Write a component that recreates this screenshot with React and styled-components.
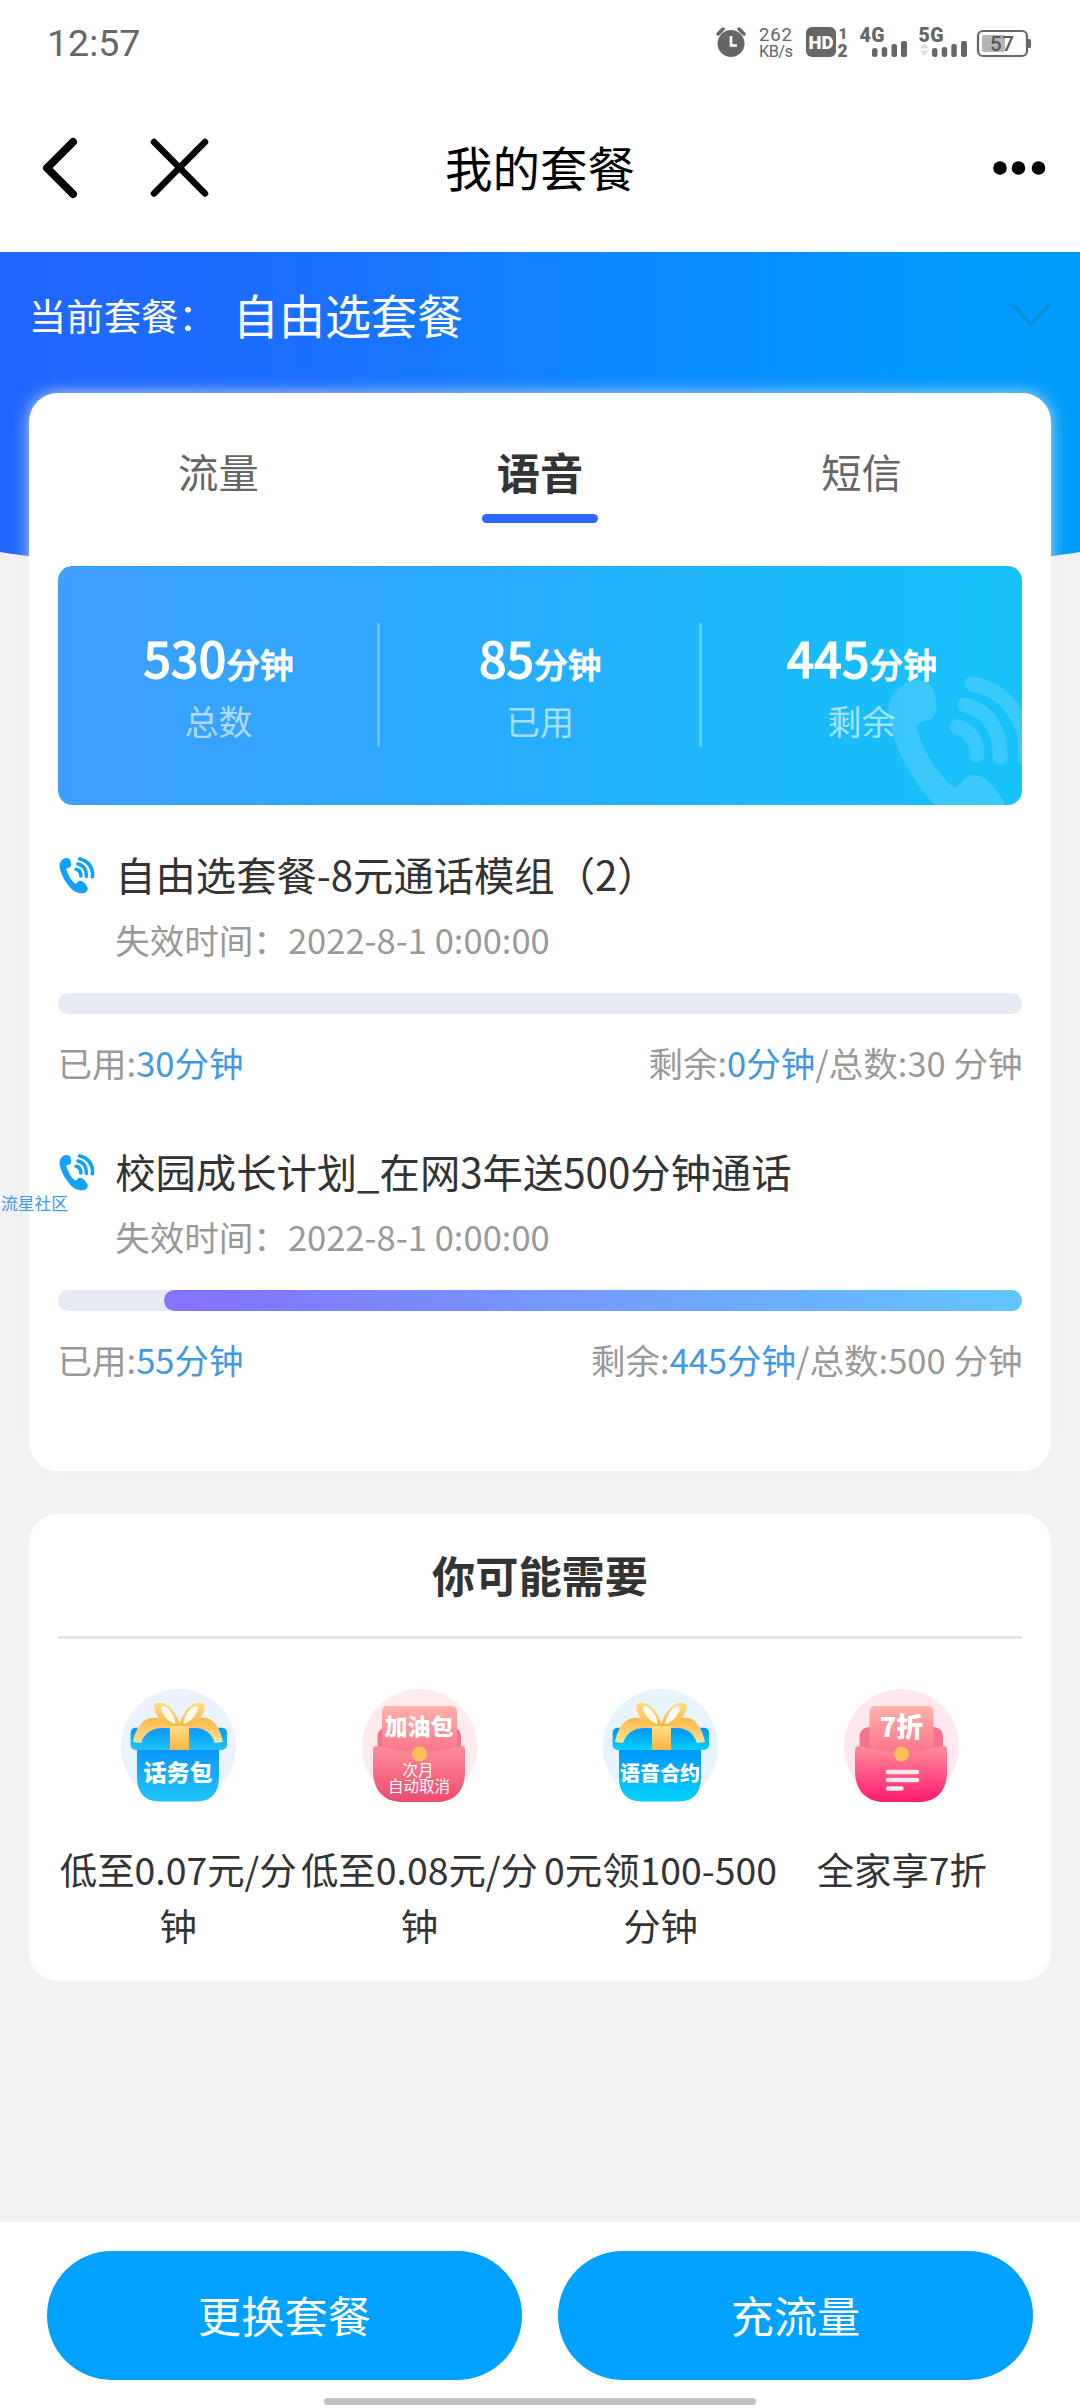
import React from 'react'
import styled, { createGlobalStyle } from 'styled-components'

const GlobalStyle = createGlobalStyle`
    * {
        box-sizing: border-box;
    }
    body {
        margin: 0;
        background: #f2f2f2;
        font-family: 'Noto Sans CJK SC', 'Noto Sans', sans-serif;
        color: #333;
    }
`

const Page = styled.div`
    position: relative;
    display: flex;
    flex-direction: column;
    width: 1080px;
    height: 2408px;
    overflow: hidden;
    background: #f2f2f2;
`

const StatusBar = styled.div`
    display: flex;
    align-items: center;
    justify-content: space-between;
    flex: none;
    height: 84px;
    padding: 0 48px 0 47px;
    background: #fff;
    color: #666;
    font-family: Roboto, sans-serif;
`

const Clock = styled.div`
    padding-top: 1px;
    font-size: 37.5px;
    line-height: 44px;
`

const StatusIcons = styled.svg`
    display: block;
    width: 316px;
    height: 40px;
    font-family: Roboto, sans-serif;
`

const NavBar = styled.div`
    display: grid;
    grid-template-columns: 1fr auto 1fr;
    align-items: center;
    flex: none;
    height: 168px;
    padding: 0 33px;
    background: #fff;
    color: #000;
`

const NavLeft = styled.div`
    display: flex;
    align-items: center;
    gap: 72px;
    padding-left: 9px;
`

const NavTitle = styled.div`
    padding-bottom: 3px;
    font-size: 47.5px;
    line-height: 70px;
`

const NavMore = styled.svg`
    justify-self: end;
    width: 54px;
    height: 14px;
`

const Header = styled.div`
    display: flex;
    align-items: flex-start;
    flex: none;
    height: 341px;
    margin-bottom: -200.3px;
    padding: 29px 28.8px 0;
    color: #fff;
    background: linear-gradient(90deg, #2166ff 0%, #1b70ff 30%, #0b8aff 60%, #0099fd 88%, #009cfb 100%);
    clip-path: circle(3577px at 50% -3236px);
`

const HeaderLabel = styled.div`
    width: 204px;
    font-size: 37.44px;
    line-height: 68px;
    white-space: nowrap;
`

const HeaderName = styled.div`
    flex: 1;
    font-size: 46.08px;
    line-height: 66px;
`

const Card = styled.div`
    position: relative;
    flex: none;
    margin: ${props => props.$gap || 0}px 28.8px 0;
    padding: 0 28.8px;
    height: ${props => props.$height}px;
    border-radius: 28.8px;
    background: #fff;
    box-shadow: 0 0 16px ${props => (props.$glow ? 'rgba(242, 242, 242, 0.75)' : 'transparent')};
`

const Tabs = styled.div`
    display: grid;
    grid-template-columns: repeat(3, 1fr);
    height: 173px;
    padding-top: 46px;
`

const Tab = styled.div`
    display: flex;
    flex-direction: column;
    align-items: center;
    font-size: ${props => (props.$active ? 43.2 : 40.32)}px;
    font-weight: ${props => (props.$active ? 700 : 400)};
    line-height: 64px;
    color: ${props => (props.$active ? '#333' : '#666')};
    &::after {
        content: '';
        width: 115.2px;
        height: 9px;
        margin-top: 11px;
        border-radius: 5px;
        background: ${props => (props.$active ? '#2b68fd' : 'transparent')};
    }
`

const Summary = styled.div`
    position: relative;
    display: grid;
    grid-template-columns: repeat(3, 1fr);
    align-items: center;
    height: 239px;
    overflow: hidden;
    border-radius: 14.4px;
    color: #fff;
    background: linear-gradient(90deg, #3f9eff 0%, #2aabff 42%, #1bbafb 75%, #17c1fa 100%);
`

const Stat = styled.div`
    position: relative;
    display: flex;
    flex-direction: column;
    align-items: center;
    justify-content: center;
    height: 124px;
    padding-top: 2px;
    & + &::before {
        content: '';
        position: absolute;
        left: -2px;
        top: 0;
        width: 3px;
        height: 100%;
        background: rgba(255, 255, 255, 0.3);
    }
`

const StatValue = styled.div`
    font-size: 49px;
    font-weight: 500;
    line-height: 62px;
    letter-spacing: -0.3px;
    -webkit-text-stroke: 0.8px #fff;
    small {
        font-size: 34px;
    }
`

const StatLabel = styled.div`
    font-size: 34px;
    line-height: 52px;
    color: rgba(255, 255, 255, 0.62);
`

const Watermark = styled.svg`
    position: absolute;
    left: 828px;
    top: 110px;
    width: 158px;
    height: 158px;
    color: rgba(255, 255, 255, 0.15);
`

const PlanItem = styled.div`
    height: 296.8px;
`

const PlanTitle = styled.div`
    display: flex;
    align-items: center;
    height: 60px;
    font-size: 40.32px;
    line-height: 60px;
    svg {
        flex: none;
        width: 38px;
        height: 38px;
        margin: 4px 18.6px 0 1px;
        color: #0fa2f8;
    }
`

const PlanExpire = styled.div`
    height: 52px;
    margin: 9px 0 28px 57.6px;
    font-size: 34.56px;
    line-height: 52px;
    color: #999;
`

const Track = styled.div`
    display: flex;
    justify-content: flex-end;
    height: 21.6px;
    border-radius: 11px;
    background: #e8eaf3;
`

const TrackFill = styled.div`
    height: 100%;
    border-radius: 11px;
    background: linear-gradient(90deg, #8571fd, #62c6ff);
`

const PlanUsage = styled.div`
    display: flex;
    justify-content: space-between;
    margin-top: 21.5px;
    font-size: 34.5px;
    line-height: 52px;
    color: #999;
    em {
        font-style: normal;
        color: #4398e4;
    }
`

const Plans = styled.div`
    padding-top: 39px;
`

const SectionTitle = styled.div`
    height: 125px;
    border-bottom: 3px solid #e4e4e4;
    font-size: 43.2px;
    font-weight: 700;
    line-height: 121px;
    text-align: center;
`

const OfferGrid = styled.div`
    display: grid;
    grid-template-columns: repeat(4, 1fr);
    padding-top: 50px;
`

const Offer = styled.div`
    display: flex;
    flex-direction: column;
    align-items: center;
    font-size: 37.4px;
    line-height: 56.16px;
    text-align: center;
    word-break: break-all;
    svg {
        width: 115px;
        height: 113px;
        margin-bottom: 39px;
    }
`

const BottomBar = styled.div`
    display: flex;
    align-items: flex-start;
    gap: 36px;
    flex: none;
    height: 186px;
    margin-top: auto;
    padding: 29px 47px 0;
    background: #fff;
`

const PillButton = styled.button`
    flex: 1;
    height: 129px;
    padding: 0 0 3px;
    border: 0;
    border-radius: 65px;
    background: #00a1ff;
    color: #fff;
    font-family: inherit;
    font-size: 43.2px;
`

const HomeIndicator = styled.div`
    position: absolute;
    left: 324px;
    bottom: 3px;
    width: 432px;
    height: 7px;
    border-radius: 4px;
    background: #c1c1c1;
`

const CommunityMark = styled.div`
    position: absolute;
    left: 1px;
    top: 1190px;
    font-size: 16.8px;
    line-height: 26px;
    color: #3f97f3;
`

const PhoneWave = () => (
    <>
        <path
            fill="currentColor"
            d="M13 12C1 22 0 38 6 56C14 84 32 114 56 136C72 150 98 158 116 142C120 138 121 130 117 124C113 117 106 108 99 103C91 97 84 98 78 103C74 107 72 110 69 111C54 104 36 72 30 50C33 46 40 45 45 43C50 40 51 33 50 27C49 18 48 10 42 7C33 2 21 4 13 12Z"
        />
        <g fill="none" stroke="currentColor" strokeWidth="15" strokeLinecap="round">
            <path d="M71 51C84 54 91 64 91 79" />
            <path d="M79 29C102 34 115 55 114 81" />
            <path d="M86 8C120 14 144 46 139 82" />
        </g>
    </>
)

const StatusGlyphs = () => (
    <StatusIcons viewBox="717 22 316 40" fill="#666">
        <circle cx="732" cy="43.5" r="13.5" />
        <path d="M719 34l5-5M740 29l5 5" stroke="#666" strokeWidth="3.5" strokeLinecap="round" />
        <path d="M732 36v9.5h6" stroke="#fff" strokeWidth="2.6" fill="none" />
        <text x="760" y="40.5" fontSize="18.5" textLength="33">262</text>
        <text x="760" y="57" fontSize="16.5" textLength="34">KB/s</text>
        <rect x="807" y="27" width="30" height="30" rx="6" />
        <text x="809.6" y="49" fontSize="18.5" fontWeight="900" fill="#fff" textLength="25">HD</text>
        <text x="839.5" y="39" fontSize="15.5" fontWeight="900">1</text>
        <text x="838.5" y="57" fontSize="17.5" fontWeight="900">2</text>
        <text x="860.5" y="41.5" fontSize="19.5" fontWeight="900" textLength="25">4G</text>
        <rect x="873" y="48" width="5.5" height="9" rx="2.5" />
        <rect x="882.7" y="47" width="5.5" height="10" rx="2.5" />
        <rect x="892.5" y="44" width="5.5" height="13" rx="2" />
        <rect x="902" y="41" width="6" height="16" rx="2" />
        <text x="919.5" y="41.5" fontSize="19.5" fontWeight="900" textLength="25">5G</text>
        <path d="M925.5 43l4.5 5.5h-9zM925.5 56l4.5-5.5h-9z" fill="#ddd" />
        <rect x="933" y="48" width="5.5" height="9" rx="2.5" />
        <rect x="942.7" y="47" width="5.5" height="10" rx="2.5" />
        <rect x="952.3" y="44" width="5.5" height="13" rx="2" />
        <rect x="962" y="41" width="6" height="16" rx="2" />
        <rect x="979" y="31" width="49" height="25" rx="5" fill="none" stroke="#666" strokeWidth="2.2" />
        <rect x="983" y="35" width="23" height="17" rx="2" fill="#b5b5b5" />
        <path d="M1029 39h1.5q1.5 0 1.5 2v5q0 2-1.5 2H1029z" />
        <text x="991" y="51" fontSize="20.5" fontWeight="500" fill="#5a5a5a" textLength="24">57</text>
    </StatusIcons>
)

const GiftIcon = ({ id, bg, top, bottom, label, size }) => (
    <svg viewBox="0 0 115 113">
        <defs>
            <linearGradient id={`${id}-body`} x1="0" y1="0" x2="0" y2="1">
                <stop offset="0" stopColor={top} />
                <stop offset="1" stopColor={bottom} />
            </linearGradient>
            <linearGradient id={`${id}-gold`} x1="0" y1="0" x2="0" y2="1">
                <stop offset="0" stopColor="#fbb548" />
                <stop offset="1" stopColor="#ffe493" />
            </linearGradient>
            <linearGradient id={`${id}-knot`} x1="0" y1="0" x2="0" y2="1">
                <stop offset="0" stopColor="#ffdf8c" />
                <stop offset="1" stopColor="#fcb53e" />
            </linearGradient>
        </defs>
        <circle cx="57.5" cy="57.5" r="57.5" fill={bg} />
        <path d="M16 58H98V88C98 104 90 112.5 76 112.5H38C24 112.5 16 104 16 88Z" fill={`url(#${id}-body)`} />
        <rect x="9.6" y="38.7" width="96.4" height="22.3" rx="5" fill={`url(#${id}-body)`} />
        <path
            d="M54 37C36 24 18 24 12 53L20 54C25 40 36 37 54 40ZM62 37C80 24 96 24 102 53L94 54C89 40 79 37 62 40Z"
            fill={`url(#${id}-gold)`}
        />
        <path
            d="M56 38C42 37 34 27 33 18C33 13 40 12 46 16C53 21 57 29 58.5 35C60 29 64 21 71 16C77 12 84 13 84 18C83 27 75 37 61 38Z"
            fill={`url(#${id}-knot)`}
        />
        <path
            d="M54 35C46 32 41 25 40 19C41 15 47 18 50 23C53 27 55 32 54 35ZM63 35C71 32 76 25 77 19C76 15 70 18 67 23C64 27 62 32 63 35Z"
            fill="#fffaf0"
        />
        <path d="M49 37H68V61H49Z" fill={`url(#${id}-knot)`} />
        <text x="57" y="92" fontSize={size} fontWeight="900" fill="#fff" textAnchor="middle">
            {label}
        </text>
    </svg>
)

const EnvelopeIcon = ({ id, bg, bottom, cardX, children }) => (
    <svg viewBox="0 0 115 113">
        <defs>
            <linearGradient id={`${id}-card`} x1="0" y1="0" x2="0" y2="1">
                <stop offset="0" stopColor="#ffb3ac" />
                <stop offset="1" stopColor="#fb6f86" />
            </linearGradient>
            <linearGradient id={`${id}-body`} x1="0" y1="0" x2="0" y2="1">
                <stop offset="0" stopColor="#fd8e98" />
                <stop offset="1" stopColor={bottom} />
            </linearGradient>
        </defs>
        <circle cx="57.5" cy="57.5" r="57.5" fill={bg} />
        <path d="M15.5 60V48Q15.5 39 25 38H90Q99 39 99 48V60Z" fill="#f0748c" />
        <rect x={cardX} y="17" width={115 - cardX * 2} height="50" rx="5" fill={`url(#${id}-card)`} />
        <path
            d="M11 60Q12 56 18 57.5Q58 68 97 57.5Q103 56 103 60V82C103 103 92 113 74 113H40C22 113 11 101 11 82Z"
            fill={`url(#${id}-body)`}
        />
        <circle cx="57.5" cy="65" r="7.5" fill="#fcbf5c" />
        {children}
    </svg>
)

const stats = [
    { value: 530, label: '总数' },
    { value: 85, label: '已用' },
    { value: 445, label: '剩余' }
]

const plans = [
    { name: '自由选套餐-8元通话模组（2）', used: 30, left: 0, total: 30 },
    { name: '校园成长计划_在网3年送500分钟通话', used: 55, left: 445, total: 500 }
]

export default function App() {
    return (
        <Page>
            <GlobalStyle />
            <StatusBar>
                <Clock>12:57</Clock>
                <StatusGlyphs />
            </StatusBar>
            <NavBar>
                <NavLeft>
                    <svg width="36" height="62" fill="none" stroke="#000" strokeWidth="8" strokeLinecap="round" strokeLinejoin="round">
                        <path d="M31 5L5 31L31 57" />
                    </svg>
                    <svg width="60" height="60" fill="none" stroke="#000" strokeWidth="6.5" strokeLinecap="round">
                        <path d="M4 4L55 55.5M55 4L4 55.5" />
                    </svg>
                </NavLeft>
                <NavTitle>我的套餐</NavTitle>
                <NavMore>
                    <circle cx="7" cy="7" r="6.8" />
                    <circle cx="25.5" cy="7" r="6.8" />
                    <circle cx="45.5" cy="7" r="6.8" />
                </NavMore>
            </NavBar>
            <Header>
                <HeaderLabel>当前套餐：</HeaderLabel>
                <HeaderName>自由选套餐</HeaderName>
                <svg width="40" height="68" fill="none" stroke="#0d8bd3" strokeWidth="3">
                    <path d="M1 23L20 43L39 23" />
                </svg>
            </Header>
            <Card $height={1078.3} $glow>
                <Tabs>
                    <Tab>流量</Tab>
                    <Tab $active>语音</Tab>
                    <Tab>短信</Tab>
                </Tabs>
                <Summary>
                    <Watermark viewBox="0 0 158 158">
                        <PhoneWave />
                    </Watermark>
                    {stats.map(item => (
                        <Stat key={item.label}>
                            <StatValue>
                                {item.value}
                                <small>分钟</small>
                            </StatValue>
                            <StatLabel>{item.label}</StatLabel>
                        </Stat>
                    ))}
                </Summary>
                <Plans>
                    {plans.map(plan => (
                        <PlanItem key={plan.name}>
                            <PlanTitle>
                                <svg viewBox="0 0 158 158">
                                    <PhoneWave />
                                </svg>
                                {plan.name}
                            </PlanTitle>
                            <PlanExpire>失效时间：2022-8-1 0:00:00</PlanExpire>
                            <Track>
                                <TrackFill style={{ width: `${(plan.left / plan.total) * 100}%` }} />
                            </Track>
                            <PlanUsage>
                                <span>
                                    已用:<em>{plan.used}分钟</em>
                                </span>
                                <span>
                                    剩余:<em>{plan.left}分钟</em>/总数:{plan.total} 分钟
                                </span>
                            </PlanUsage>
                        </PlanItem>
                    ))}
                </Plans>
            </Card>
            <Card $height={467} $gap={43}>
                <SectionTitle>你可能需要</SectionTitle>
                <OfferGrid>
                    <Offer>
                        <GiftIcon id="call" bg="#e9f2fe" top="#0c93fb" bottom="#1fc5fb" label="话务包" size="23" />
                        低至0.07元/分钟
                    </Offer>
                    <Offer>
                        <EnvelopeIcon id="fuel" bg="#ffeaed" bottom="#ee4a6e" cardX={20}>
                            <text x="57" y="46" fontSize="23" fontWeight="900" fill="#fff" textAnchor="middle">
                                加油包
                            </text>
                            <text fontSize="15.5" fill="#fff" textAnchor="middle">
                                <tspan x="56" y="86.5">次月</tspan>
                                <tspan x="57" y="103">自动取消</tspan>
                            </text>
                        </EnvelopeIcon>
                        低至0.08元/分钟
                    </Offer>
                    <Offer>
                        <GiftIcon id="voice" bg="#e6f4fe" top="#0092fb" bottom="#02d2fd" label="语音合约" size="20" />
                        0元领100-500分钟
                    </Offer>
                    <Offer>
                        <EnvelopeIcon id="family" bg="#fee7ee" bottom="#ff1a73" cardX={25.5}>
                            <text x="57.5" y="47.5" fontSize="27" fontWeight="900" fill="#fff" textAnchor="middle">
                                7折
                            </text>
                            <path d="M44 83H73M44 91H73M44 99.5H57.5" stroke="#ffe9ee" strokeWidth="4.5" strokeLinecap="round" />
                        </EnvelopeIcon>
                        全家享7折
                    </Offer>
                </OfferGrid>
            </Card>
            <BottomBar>
                <PillButton>更换套餐</PillButton>
                <PillButton>充流量</PillButton>
            </BottomBar>
            <HomeIndicator />
            <CommunityMark>流星社区</CommunityMark>
        </Page>
    )
}
